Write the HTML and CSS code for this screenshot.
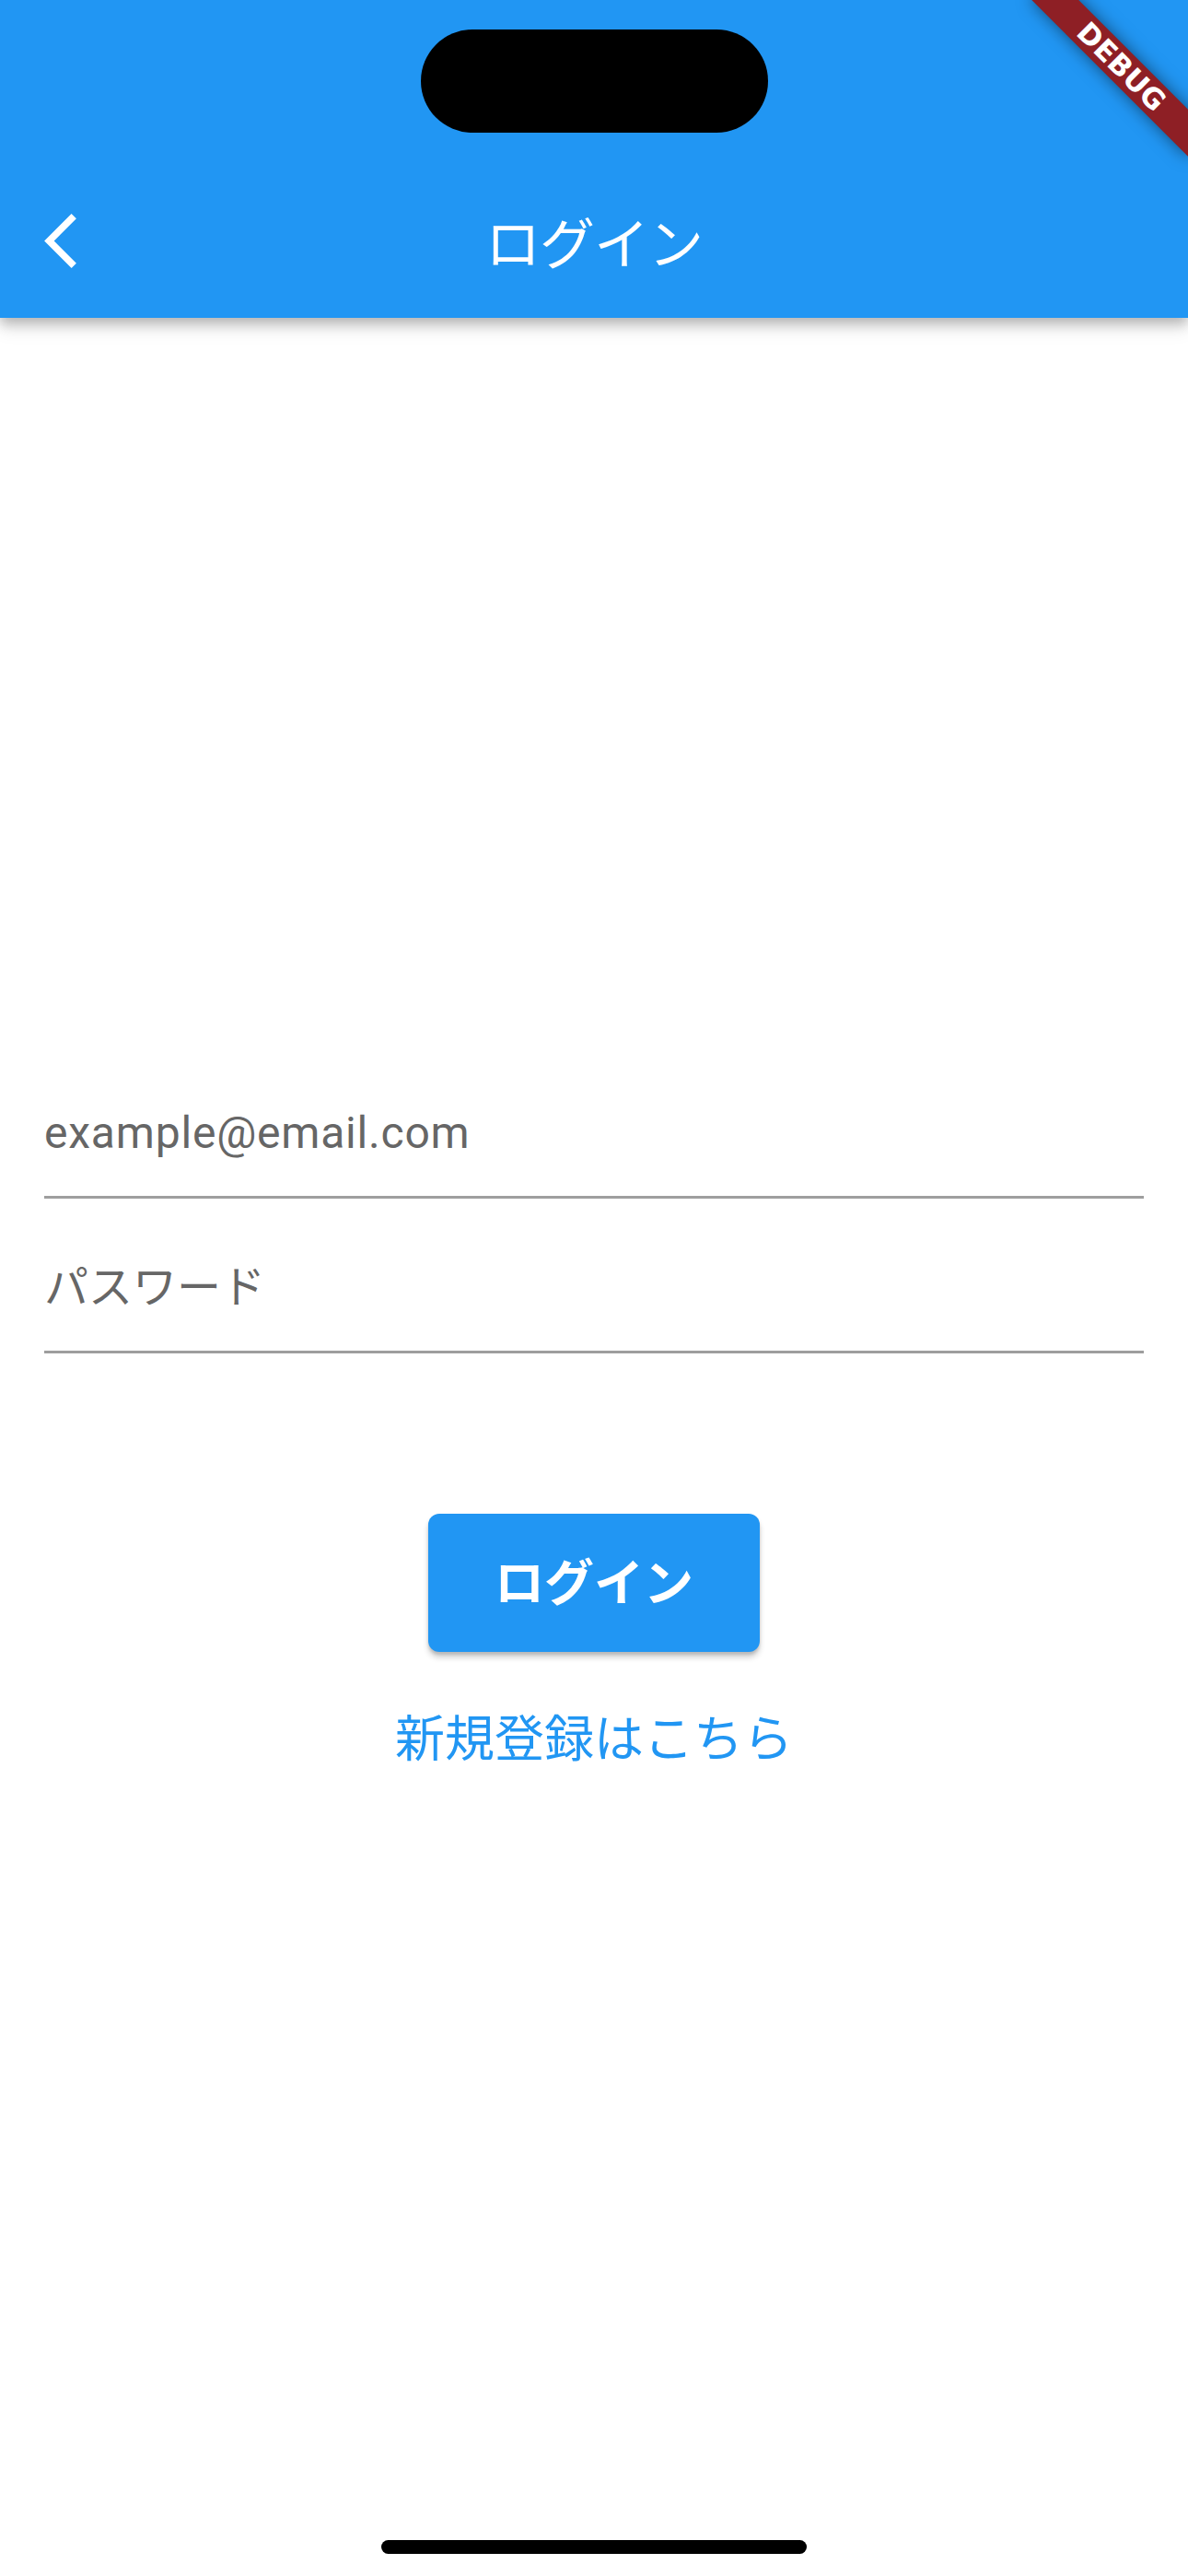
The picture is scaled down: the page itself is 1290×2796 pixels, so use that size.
FILE: index.html
```
<!DOCTYPE html>
<html lang="ja">
<head>
<meta charset="utf-8">
<title>ログイン</title>
<link rel="stylesheet" href="styles.css">
</head>
<body>
<div class="screen">
  <header class="app-bar">
    <div class="status">
      <div class="island"></div>
    </div>
    <div class="toolbar">
      <svg class="back" viewBox="5.84 2.1 11.67 19.8" width="35" height="59" aria-hidden="true">
        <path d="M17.51 3.87L15.73 2.1 5.84 12l9.9 9.9 1.77-1.77L9.38 12l8.13-8.13z" fill="#fff"/>
      </svg>
      <h1 class="title">ログイン</h1>
    </div>
  </header>

  <main class="content">
    <div class="field field-email">example@email.com</div>
    <div class="field">パスワード</div>
    <div class="actions">
      <button class="login-btn" type="button">ログイン</button>
      <a class="signup-link" href="#">新規登録はこちら</a>
    </div>
  </main>

  <div class="debug-banner">DEBUG</div>
  <div class="home-indicator"></div>
</div>
</body>
</html>
```
FILE: styles.css
```
* { box-sizing: border-box; }

html, body {
  margin: 0;
  padding: 0;
  background: #ffffff;
}

.screen {
  position: relative;
  width: 1290px;
  height: 2796px;
  overflow: hidden;
  background: #ffffff;
  font-family: Roboto, "Noto Sans CJK JP", sans-serif;
}

/* ---------- App bar ---------- */
.app-bar {
  position: relative;
  z-index: 2;
  height: 345px;
  background: #2196f3;
  box-shadow: 0 6px 12px rgba(0, 0, 0, 0.22), 0 12px 18px rgba(0, 0, 0, 0.10);
}

.status {
  height: 177px;
  display: flex;
  justify-content: center;
  padding-top: 32px;
}

.island {
  width: 377px;
  height: 112px;
  border-radius: 56px;
  background: #000;
}

.toolbar {
  position: relative;
  height: 168px;
  display: flex;
  align-items: center;
  justify-content: center;
}

.back {
  position: absolute;
  left: 48px;
  top: 55px;
  display: block;
}

.title {
  margin: 0;
  font-family: "Noto Sans CJK JP", sans-serif;
  font-weight: 400;
  font-size: 60px;
  line-height: 60px;
  color: #ffffff;
  letter-spacing: -1px;
}

/* ---------- Content ---------- */
.content {
  padding: 788px 48px 0;
}

.field {
  height: 168px;
  padding-top: 73px;
  border-bottom: 3px solid #9e9e9e;
  font-size: 48px;
  line-height: 48px;
  color: #666666;
}

.field-email {
  letter-spacing: 0.8px;
}

.actions {
  display: flex;
  flex-direction: column;
  align-items: center;
  padding-top: 174px;
}

.login-btn {
  width: 360px;
  height: 150px;
  border: 0;
  border-radius: 12px;
  background: #2196f3;
  color: #ffffff;
  font-family: "Noto Sans CJK JP", sans-serif;
  font-weight: 700;
  font-size: 54px;
  line-height: 54px;
  padding: 0 0 6px;
  display: flex;
  align-items: center;
  justify-content: center;
  box-shadow: 0 6px 6px rgba(0, 0, 0, 0.18), 0 3px 3px rgba(0, 0, 0, 0.12);
}

.signup-link {
  margin-top: 64px;
  font-family: "Noto Sans CJK JP", sans-serif;
  font-weight: 400;
  font-size: 54px;
  line-height: 54px;
  color: #2196f3;
  text-decoration: none;
}

/* ---------- Overlays ---------- */
.debug-banner {
  position: absolute;
  z-index: 5;
  left: 1170px;
  top: 84px;
  width: 240px;
  height: 36px;
  transform-origin: 120px -84px;
  transform: rotate(45deg);
  background: #8e1f25;
  box-shadow: 0 0 18px rgba(0, 0, 0, 0.5);
  color: #ffffff;
  font-family: "DejaVu Sans", sans-serif;
  font-weight: 700;
  font-size: 31px;
  line-height: 36px;
  text-align: center;
}

.home-indicator {
  position: absolute;
  z-index: 5;
  left: 414px;
  top: 2757px;
  width: 462px;
  height: 15px;
  border-radius: 8px;
  background: #000;
}
```
